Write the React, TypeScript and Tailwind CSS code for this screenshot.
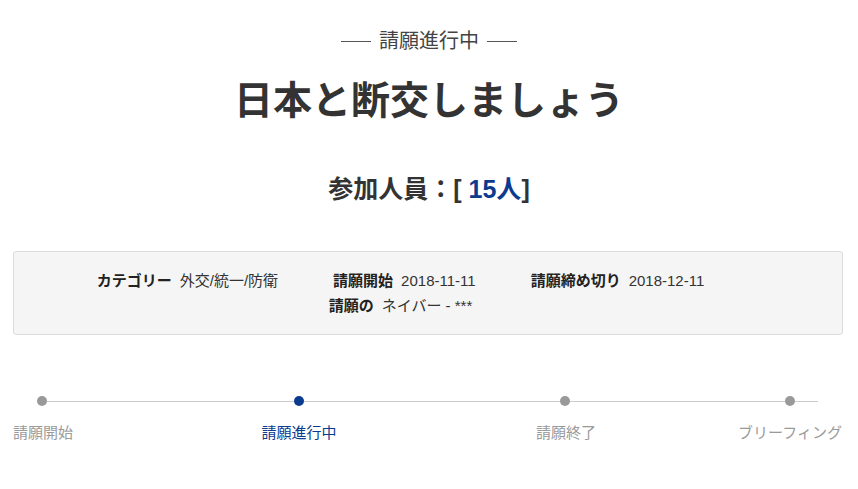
import React from 'react';

const font = { fontFamily: '"Liberation Sans", "Noto Sans CJK JP", sans-serif' };

const infoRows = [
  [
    { label: 'カテゴリー', value: '外交/統一/防衛' },
    { label: '請願開始', value: '2018-11-11' },
    { label: '請願締め切り', value: '2018-12-11' },
  ],
  [{ label: '請願の', value: 'ネイバー - ***' }],
];

// label cells are sized so each one is centred under its dot
const steps = [
  { name: '請願開始', cell: 'w-[86px]', active: false },
  { name: '請願進行中', cell: 'w-[426px]', active: true },
  { name: '請願終了', cell: 'w-[108px]', active: false },
  { name: 'ブリーフィング', cell: 'ml-[102px] w-[136px]', active: false },
];

const Dot = ({ active }: { active?: boolean }) => (
  <div className={`w-[10px] h-[10px] rounded-full shrink-0 ${active ? 'bg-[#0b3b8f]' : 'bg-[#999999]'}`} />
);

const Line = ({ className }: { className: string }) => (
  <div className={`h-px bg-[#cccccc] shrink-0 ${className}`} />
);

export default function App() {
  return (
    <div className="w-[858px] h-[489px] bg-white overflow-hidden" style={font}>
      {/* status header */}
      <div className="pt-[27px] flex items-center justify-center gap-2">
        <div className="w-[30px] h-px bg-[#555555]" />
        <span className="text-[20px] leading-[28px] text-[#444444]">請願進行中</span>
        <div className="w-[30px] h-px bg-[#555555]" />
      </div>

      <h1 className="mt-[21px] text-center text-[39px] leading-[50px] font-bold text-[#333333]">
        日本と断交しましょう
      </h1>

      <p className="mt-[47px] text-center text-[25px] leading-[33px] font-bold text-[#333333]">
        参加人員：[ <span className="text-[#0b3b8f]">15人</span>]
      </p>

      {/* petition details */}
      <div className="mt-[45px] ml-[13px] w-[830px] border border-[#dddddd] rounded-[3px] bg-[#f5f5f5] py-[16px] text-[15px] leading-[25px]">
        {infoRows.map((row, i) => (
          <div key={i} className="flex justify-center">
            {row.map((item) => (
              <div key={item.label} className="mr-[55px] whitespace-nowrap">
                <span className="font-bold text-[#222222]">{item.label}</span>
                <span className="ml-2 text-[#333333]">{item.value}</span>
              </div>
            ))}
          </div>
        ))}
      </div>

      {/* progress timeline */}
      <div className="mt-[61px] pl-[37px] flex items-center">
        <Dot />
        <Line className="w-[247px]" />
        <Dot active />
        <Line className="w-[256px]" />
        <Dot />
        <Line className="w-[215px]" />
        <Dot />
        <Line className="w-[23px]" />
      </div>
      <div className="mt-[16px] flex">
        {steps.map((step) => (
          <div key={step.name} className={`${step.cell} flex justify-center shrink-0`}>
            <span
              className={`whitespace-nowrap text-[15px] leading-[22px] ${
                step.active ? 'text-[#0b3b8f]' : 'text-[#9a9a9a]'
              }`}
            >
              {step.name}
            </span>
          </div>
        ))}
      </div>
    </div>
  );
}
